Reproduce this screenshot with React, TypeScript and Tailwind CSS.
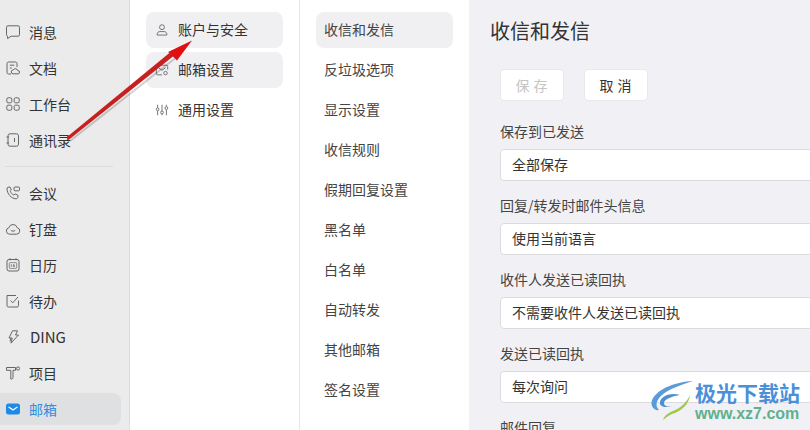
const FONT = "font-['Noto_Sans_CJK_SC','Noto_Sans',sans-serif]";

type IconProps = { className?: string };

const base = { fill: "none", stroke: "currentColor", strokeWidth: 1, viewBox: "0 0 16 16" };

function IconChat({ className }: IconProps) {
  return <svg {...base} className={className}><path d="M3 1.800h10a1.500 1.500 0 0 1 1.500 1.500v7.400a1.500 1.500 0 0 1-1.500 1.500H6l-3.400 2.400V12.200A1.500 1.500 0 0 1 1.500 10.700V3.300A1.500 1.500 0 0 1 3 1.800z" /></svg>;
}
function IconDoc({ className }: IconProps) {
  return <svg {...base} className={className}><path d="M6 14H3.500A1.500 1.500 0 0 1 2 12.500v-9A1.500 1.500 0 0 1 3.500 2h7A1.500 1.500 0 0 1 12 3.500V7M4.800 5.200h4.500M4.800 8h2" /><path d="M8.200 13.800a1.900 1.900 0 0 1 0-3.800 2.500 2.500 0 0 1 4.600.6 1.600 1.600 0 0 1 .3 3.200z" /></svg>;
}
function IconGrid({ className }: IconProps) {
  return <svg {...base} className={className}><rect x="1.800" y="1.800" width="5" height="5" rx="1.400" /><rect x="9.200" y="1.800" width="5" height="5" rx="1.400" /><rect x="1.800" y="9.200" width="5" height="5" rx="1.400" /><rect x="9.200" y="9.200" width="5" height="5" rx="1.400" /></svg>;
}
function IconContacts({ className }: IconProps) {
  return <svg {...base} className={className}><rect x="3" y="1.800" width="10.500" height="12.400" rx="2" /><path d="M9.500 6v4M1.500 5h2.600M1.500 11h2.600" /></svg>;
}
function IconMeeting({ className }: IconProps) {
  return <svg {...base} className={className}><path d="M3 2.200 5 2l1.300 3-1.200 1.200c.7 1.600 2 3 3.800 3.900l1.200-1.200 3 1.500-.3 2.100c-.2.900-1 1.400-1.900 1.300C5.800 13.300 2.400 9 2 4c-.1-.9.2-1.600 1-1.800z" /><rect x="9" y="2" width="5.500" height="3.800" rx="1" /></svg>;
}
function IconCloud({ className }: IconProps) {
  return <svg {...base} className={className}><path d="M4.500 13.200a3.300 3.300 0 0 1-.6-6.500 4.300 4.300 0 0 1 8.300 0 3.300 3.300 0 0 1-.6 6.500z" /><path d="M5.800 9.300c1 1.100 3.400 1.100 4.400 0" /></svg>;
}
function IconCalendar({ className }: IconProps) {
  return (
    <svg {...base} className={className}>
      <rect x="2" y="2.500" width="12" height="11.500" rx="2" />
      <path d="M5 1.300v2M11 1.300v2" />
      <rect x="4.300" y="5.600" width="7.400" height="5.800" rx="0.800" strokeWidth={0.7} />
      <path d="M6.300 7.200v2.700M9.600 7.200c-1-.2-1.400.5-1.400 1.500 0 .8.300 1.200.8 1.200s.8-.4.800-.8-.3-.7-.8-.7-.8.300-.8.600" strokeWidth={0.7} />
    </svg>
  );
}
function IconTodo({ className }: IconProps) {
  return <svg {...base} className={className}><path d="M13.500 7.500v5a1.500 1.500 0 0 1-1.500 1.500H3.500A1.500 1.500 0 0 1 2 12.500V2.500h9" /><path d="m5.500 7.500 2.300 2.300 5.200-5.800" /></svg>;
}
function IconBolt({ className }: IconProps) {
  return <svg {...base} className={className}><path d="M7.500 1.800h5L10.500 6h3l-7.500 8.200L7.200 9H4z" /><path d="m6 9-1 3.500" /></svg>;
}
function IconProject({ className }: IconProps) {
  return <svg {...base} className={className}><path d="M1.500 2.500h9v2.800H8V12.500a1.500 1.500 0 0 1-1.500 1.500H5.800V5.300H1.500z" /><circle cx="13" cy="3.500" r="1.600" /></svg>;
}
function IconMailFill({ className }: IconProps) {
  return (
    <svg viewBox="0 0 16 16" className={className}>
      <rect x="1" y="2.500" width="14" height="11" rx="2.500" fill="#1e8ae8" />
      <path d="m4 6.300 4 2.700 4-2.700" fill="none" stroke="#fff" strokeWidth={1.3} strokeLinecap="round" />
    </svg>
  );
}
function IconUser({ className }: IconProps) {
  return <svg {...base} className={className}><circle cx="8" cy="4.800" r="2.800" /><path d="M2.500 13.800v-1.300c0-1.500 1.500-2.700 3-2.700h5c1.500 0 3 1.200 3 2.700v1.300z" /></svg>;
}
function IconMailSetting({ className }: IconProps) {
  return <svg {...base} className={className}><path d="M8 13.500H3A1.500 1.500 0 0 1 1.500 12V4A1.500 1.500 0 0 1 3 2.500h10A1.500 1.500 0 0 1 14.500 4v3.500" /><path d="m4 5.500 4 2.800 4-2.800" /><circle cx="12" cy="11.500" r="2" /></svg>;
}
function IconSliders({ className }: IconProps) {
  return <svg {...base} className={className}><path d="M3 2v3.500M3 9v5M8 2v7M8 12.500V14M13 2v2M13 7.500V14" /><circle cx="3" cy="7.200" r="1.600" /><circle cx="8" cy="10.800" r="1.600" /><circle cx="13" cy="5.800" r="1.600" /></svg>;
}

const NAV_TOP = [
  { label: "消息", Icon: IconChat },
  { label: "文档", Icon: IconDoc },
  { label: "工作台", Icon: IconGrid },
  { label: "通讯录", Icon: IconContacts },
];
const NAV_BOTTOM = [
  { label: "会议", Icon: IconMeeting },
  { label: "钉盘", Icon: IconCloud },
  { label: "日历", Icon: IconCalendar },
  { label: "待办", Icon: IconTodo },
  { label: "DING", Icon: IconBolt },
  { label: "项目", Icon: IconProject },
];

const SETTINGS = [
  { label: "账户与安全", Icon: IconUser, bg: true },
  { label: "邮箱设置", Icon: IconMailSetting, bg: true },
  { label: "通用设置", Icon: IconSliders, bg: false },
];

const SUB_MENU = ["收信和发信", "反垃圾选项", "显示设置", "收信规则", "假期回复设置", "黑名单", "白名单", "自动转发", "其他邮箱", "签名设置"];

const FIELDS = [
  { label: "保存到已发送", value: "全部保存" },
  { label: "回复/转发时邮件头信息", value: "使用当前语言" },
  { label: "收件人发送已读回执", value: "不需要收件人发送已读回执" },
  { label: "发送已读回执", value: "每次询问" },
];

function NavItem({ label, Icon }: { label: string; Icon: (p: IconProps) => React.ReactNode }) {
  return (
    <div className="flex h-9 items-center pl-[5px]">
      <Icon className="h-4 w-4 shrink-0 text-[#666]" />
      {/* DING is the only latin label and sits a bit wider */}
      <span className={label === "DING" ? "ml-[9px] text-[15px] text-[#333]" : "ml-[8px] text-sm text-[#333]"}>{label}</span>
    </div>
  );
}

function Arrow() {
  return (
    <svg className="pointer-events-none absolute left-0 top-0" width="300" height="160" viewBox="0 0 300 160">
      <path d="M70 141 178 56" stroke="#000" strokeOpacity={0.18} strokeWidth={2} />
      <path d="M67 137 68.500 140 176 54 173 50z" fill="#c8201f" />
      <path d="m192 40.500-24 11.500 5 3-1 .5 5 5z" fill="#e00f12" />
    </svg>
  );
}

function Watermark() {
  return (
    <div className="pointer-events-none absolute left-[650px] top-[380px] flex items-start whitespace-nowrap">
      <svg width="44" height="42" viewBox="0 0 44 42">
        <path d="M43 1C26 2 8 8 2 20c-2 6 2 11 7 10C5 26 6 21 11 16 18 9 31 5 43 1z" fill="#5b9bd8" />
        <path d="M30 15c-9-3-19 1-20 7-1 5 6 6 12 4-5 1-8 0-8-3 0-4 9-7 16-8z" fill="#4f8fd0" />
        <path d="M40 15c-1 9-8 16-18 19-6 3-9 6-9 6 1-4 5-7 10-9 8-3 14-9 17-16z" fill="#9ec84a" />
      </svg>
      <div className="ml-[1px] flex flex-col">
        <span className={`${FONT} h-[25px] text-[21px] font-bold leading-[25px] text-[#4a90d9]`}>极光下载站</span>
        <span className="h-[18px] font-['Liberation_Sans',sans-serif] text-[16px] font-bold leading-[18px] text-[#5fb08e]">www.xz7.com</span>
      </div>
    </div>
  );
}

export default function App() {
  return (
    <div className={`${FONT} relative flex h-[430px] w-[810px] overflow-hidden bg-white`}>
      <aside className="w-[130px] shrink-0 border-r border-[#dcdcdf] bg-[#ebebec] pt-[14px] pr-[8px]">
        {NAV_TOP.map((n) => (
          <NavItem key={n.label} {...n} />
        ))}
        <div className="mt-[8px] mb-[8px] ml-[5px] mr-[8px] h-px bg-[#dcdcde]" />
        {NAV_BOTTOM.map((n) => (
          <NavItem key={n.label} {...n} />
        ))}
        <div className="mt-[2px] flex h-8 items-center rounded-r-lg bg-[#dfe0e2] pl-[5px]">
          <IconMailFill className="h-4 w-4 shrink-0" />
          <span className="ml-[8px] text-sm text-[#2f8fe0]">邮箱</span>
        </div>
      </aside>

      <nav className="flex w-[170px] shrink-0 flex-col gap-1 border-r border-[#e6e6e8] px-4 pt-3">
        {SETTINGS.map(({ label, Icon, bg }) => (
          <div key={label} className={`flex h-9 items-center rounded-lg pl-[9px] ${bg ? "bg-[#f0f0f2]" : ""}`}>
            <Icon className="h-[14px] w-[14px] shrink-0 text-[#666]" />
            <span className="mb-[2px] ml-[9px] text-sm text-[#333]">{label}</span>
          </div>
        ))}
      </nav>

      <nav className="flex w-[169px] shrink-0 flex-col gap-1 px-4 pt-3">
        {SUB_MENU.map((s, i) => (
          <div key={s} className={`flex h-9 items-center rounded-lg pb-[2px] pl-2 text-sm text-[#444] ${i === 0 ? "bg-[#f0f0f2]" : ""}`}>
            {s}
          </div>
        ))}
      </nav>

      <main className="min-w-0 flex-1 bg-[#f1f1f5] pl-[21px]">
        <h1 className="mt-[16px] text-[20px] font-normal leading-[30px] text-[#333]">收信和发信</h1>
        <div className="ml-[10px] mt-[23px] flex gap-5">
          <button className="h-8 w-16 rounded border border-[#e8e8ea] bg-white pl-[3px] text-sm tracking-[4px] text-[#c4c4c4]">保存</button>
          <button className="h-8 w-16 rounded border border-[#e8e8ea] bg-white pl-[3px] text-sm tracking-[4px] text-[#333]">取消</button>
        </div>
        <div className="ml-[10px] mt-[20px] w-[340px]">
          {FIELDS.map((f) => (
            <div key={f.label} className="h-[74px]">
              <div className="h-[28px] text-sm leading-[21px] text-[#444]">{f.label}</div>
              <div className="flex h-8 items-center rounded border border-[#dcdcdf] bg-white pb-[2px] pl-[11px] text-sm text-[#333]">{f.value}</div>
            </div>
          ))}
          <div className="text-sm leading-[21px] text-[#444]">邮件回复</div>
        </div>
      </main>

      <Arrow />
      <Watermark />
    </div>
  );
}
